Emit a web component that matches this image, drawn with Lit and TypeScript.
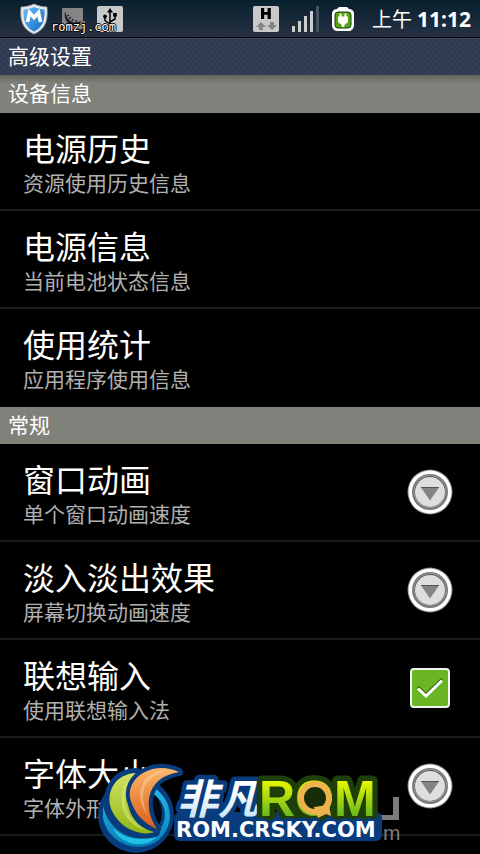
import { LitElement, html, svg, css } from "lit";
import { customElement, property, state } from "lit/decorators.js";

interface Preference {
  id: string;
  title: string;
  summary: string;
  control?: "menu" | "check";
}

const deviceInfo: Preference[] = [
  { id: "history", title: "电源历史", summary: "资源使用历史信息" },
  { id: "power", title: "电源信息", summary: "当前电池状态信息" },
  { id: "usage", title: "使用统计", summary: "应用程序使用信息" },
];

const general: Preference[] = [
  { id: "window", title: "窗口动画", summary: "单个窗口动画速度", control: "menu" },
  { id: "fade", title: "淡入淡出效果", summary: "屏幕切换动画速度", control: "menu" },
  { id: "predict", title: "联想输入", summary: "使用联想输入法", control: "check" },
  { id: "font", title: "字体大小", summary: "字体外形大小", control: "menu" },
];

@customElement("status-bar")
class StatusBar extends LitElement {
  static styles = css`
    :host {
      display: flex;
      align-items: center;
      justify-content: space-between;
      height: 38px;
      padding: 0 9px 0 20px;
      box-sizing: border-box;
      color: #fff;
      background: linear-gradient(#08202e, #263144);
      border-bottom: 1px solid #000;
    }
    .group {
      display: flex;
      align-items: center;
      gap: 14px;
      position: relative;
    }
    .right { gap: 13px; }
    svg { display: block; }
    .mark {
      position: absolute;
      left: 31px;
      top: 17px;
      font: 12px/14px "DejaVu Sans Mono", monospace;
      text-shadow: 1px 0 #000, -1px 0 #000, 0 1px #000, 0 -1px #000;
    }
    .clock {
      display: flex;
      align-items: center;
      gap: 5px;
      margin-left: 5px;
      font: 20px/24px "Noto Sans CJK SC", sans-serif;
      white-space: nowrap;
    }
    .time { font: bold 21px/24px "Noto Sans", sans-serif; }
  `;

  render() {
    return html`
      <div class="group">
        <svg width="28" height="32" viewBox="0 0 28 32">
          <defs>
            <linearGradient id="sh" x1="0" y1="0" x2="1" y2="1">
              <stop offset="0" stop-color="#6cc0f8" />
              <stop offset="1" stop-color="#1169c9" />
            </linearGradient>
          </defs>
          <path d="M14 1C10 3 5 4 1 4C0 17 2 26 14 31C26 26 28 17 27 4C23 4 18 3 14 1Z" fill="#e6e8e9" stroke="#9da5aa" stroke-width=".8" />
          <path d="M14 4C11 5.500 7 6.500 3.500 6.500C3 17 5 24 14 28.500C23 24 25 17 24.500 6.500C21 6.500 17 5.500 14 4Z" fill="url(#sh)" />
          <path d="M7.500 19L9.500 9.500L14 14.500L18.500 9.500L20.500 19" fill="none" stroke="#fff" stroke-width="3.600" />
        </svg>
        <svg width="21" height="21" viewBox="0 0 21 21">
          <rect width="21" height="21" rx="1" fill="#858585" />
          <path d="M3 3C4 6 4 9 7 12C10 15 15 15 19 13L18 16C14 19 9 18 6 15C3 12 2 8 3 3Z" fill="#1a2026" />
          <path d="M5 8l2-1M7 11l2-2M10 13l1-2M14 14v-2M6 15l-2 4" stroke="#1a2026" stroke-width="1.300" />
        </svg>
        <svg width="26" height="26" viewBox="0 0 26 26">
          <rect width="26" height="26" rx="2" fill="#c9c9c9" />
          <path d="M13 5V22M13 18L8 14.500V11M13 16L18 13V9" fill="none" stroke="#000" stroke-width="1.500" />
          <path d="M13 2L16 6.500H10Z" />
          <circle cx="8" cy="10.500" r="1.900" />
          <rect x="16.200" y="7" width="3.600" height="3.600" />
          <circle cx="13" cy="22" r="2.300" />
        </svg>
        <span class="mark">romzj.com</span>
      </div>
      <div class="group right">
        <svg width="26" height="26" viewBox="0 0 26 26">
          <rect width="26" height="26" rx="2" fill="#c9c9c9" />
          <path d="M8 2h3.200v4h3.400v-4h3.200v11h-3.200v-4.300h-3.400v4.300H8Z" />
          <path d="M8 16l5 5h-3v3H6v-3H3ZM19 24l-5-5h3v-3h4v3h3Z" fill="#858585" />
        </svg>
        <svg width="27" height="26" viewBox="0 0 27 26">
          <path d="M0 20h3v6H0ZM6 15h3v11H6ZM12 10h3v16h-3ZM18 5h3v21h-3Z" fill="#ccc" />
          <path d="M24 0h3v26h-3Z" fill="#455361" />
        </svg>
        <svg width="22" height="24" viewBox="0 0 22 24">
          <path d="M7 0H15L17 2Q21 2 22 6V19Q21 23 18 24H4Q1 23 0 19V6Q1 2 5 2Z" fill="#fff" />
          <rect x="3" y="5" width="16" height="16" rx="3" fill="#57a20f" stroke="#173c12" />
          <path d="M7.500 6.500h2v3h3v-3h2v3H16v4q0 3-3 3.500l-1 3h-2l-1-3q-3-.5-3-3.500v-4h1.500Z" fill="#fff" />
        </svg>
        <div class="clock"><span>上午</span><span class="time">11:12</span></div>
      </div>
    `;
  }
}

@customElement("preference-row")
class PreferenceRow extends LitElement {
  @property({ attribute: false }) item!: Preference;
  @state() private checked = true;

  static styles = css`
    :host {
      display: flex;
      align-items: center;
      justify-content: space-between;
      height: 98px;
      padding: 0 27px 0 23px;
      box-sizing: border-box;
      border-bottom: 2px solid #1b1b1e;
      color: #fff;
    }
    :host([last]) { border-bottom-color: #000; }
    .label { display: block; padding-top: 4px; white-space: nowrap; }
    .title { display: block; font-size: 32px; line-height: 38px; }
    .summary { display: block; font-size: 21px; line-height: 32px; color: #b0b0b0; }
    .menu {
      width: 46px;
      height: 46px;
      padding: 0;
      border: 0;
      background: none;
    }
    .menu svg { display: block; }
    .check {
      appearance: none;
      width: 40px;
      height: 40px;
      margin: 0 3px;
      border: 2px solid #f1f5ec;
      border-radius: 4px;
      background: #444;
    }
    .check:checked { background: #6ab523; }
    .wrap { display: grid; }
    .wrap > * { grid-area: 1 / 1; }
    .tick { place-self: center; pointer-events: none; }
  `;

  private toggle(e: Event) {
    this.checked = (e.target as HTMLInputElement).checked;
  }

  private control() {
    if (this.item.control === "menu") {
      return html`<button class="menu" aria-label=${this.item.title}>
        <svg width="46" height="46" viewBox="0 0 46 46">
          <circle cx="23" cy="23" r="22.500" fill="#8d8d8d" />
          <circle cx="23" cy="23" r="21.500" fill="#fff" />
          <circle cx="23" cy="23" r="18" fill="#777" />
          <circle cx="23" cy="22.500" r="16.500" fill="#999" />
          <circle cx="23" cy="22.500" r="15.500" fill="#555" />
          <circle cx="23" cy="23" r="15" fill="#dedede" />
          <path d="M14 18.500H32L23 31.500Z" fill="#848484" />
          <path d="M14 18.500H32" stroke="#555" />
        </svg>
      </button>`;
    }
    if (this.item.control === "check") {
      return html`<span class="wrap">
        <input class="check" id="box" type="checkbox" .checked=${this.checked} @change=${this.toggle} />
        ${this.checked
          ? html`<svg class="tick" width="28" height="24" viewBox="0 0 28 24">
              <path d="M2 11L10 18.500L26 3" fill="none" stroke="#2e5a0b" stroke-width="2.500" />
              <path d="M2 12.500L10 20L26 4.500" fill="none" stroke="#fff" stroke-width="3" />
            </svg>`
          : null}
      </span>`;
    }
    return null;
  }

  render() {
    return html`
      <label class="label" for="box">
        <span class="title">${this.item.title}</span>
        <span class="summary">${this.item.summary}</span>
      </label>
      ${this.control()}
    `;
  }
}

@customElement("site-badge")
class SiteBadge extends LitElement {
  static styles = css`
    :host { display: block; }
    svg { display: block; overflow: visible; }
    .han { font: italic 700 41px "Noto Sans CJK SC", sans-serif; }
    .rom { font: bold 50px "Liberation Sans", sans-serif; }
    .url { font: bold 21px "DejaVu Sans", sans-serif; }
    .faint { font: 21px "Liberation Sans", sans-serif; }
    .edge { paint-order: stroke; stroke-linejoin: round; }
  `;

  private emblem() {
    const leaf = "M39 11C18 11 6 30 14 49C22 66 42 75 57 70C35 66 19 40 39 11Z";
    const fire = "M81 10C70 5 58 5 49 9C35 15 28 28 34 42C38 53 47 62 59 67C46 48 45 16 81 10Z";
    return svg`
      <circle cx="38" cy="53" r="38" fill="#083c7c" />
      <path d="M50 27C47 41 51 53 60 63C66 51 62 36 50 27Z" fill="#020911" stroke="#020911" stroke-width="2" />
      <path d="M55 25C76 38 78 66 58 80C38 92 10 81 5 56V44C12 72 38 82 56 73C72 62 70 39 52 30Z" fill="url(#sea)" />
      <path d="M15 66C28 78 46 80 60 73C50 88 22 84 15 66Z" fill="#20bfe4" />
      <path d=${leaf} fill="url(#leaf)" stroke="#083c7c" stroke-width="10" stroke-linejoin="round" class="edge" />
      <path d="M31 15C14 42 28 64 50 69C32 60 20 43 31 15Z" fill="#e1ed85" opacity=".5" />
      <path d=${fire} fill="url(#fire)" stroke="#083c7c" stroke-width="8" stroke-linejoin="round" class="edge" />
      <path d="M72 8C42 9 34 32 51 56C40 34 43 14 72 8Z" fill="#ffd19e" opacity=".5" />
    `;
  }

  render() {
    return html`<svg width="306" height="92" viewBox="0 0 306 92" role="img" aria-label="非凡ROM">
      <defs>
        <linearGradient id="leaf" x1="0" y1="0" x2="0" y2="1">
          <stop offset="0" stop-color="#d3e267" /><stop offset="1" stop-color="#8fb714" />
        </linearGradient>
        <linearGradient id="fire" x1="0" y1="0" x2="0" y2="1">
          <stop offset="0" stop-color="#f9b76d" /><stop offset="1" stop-color="#dc5b16" />
        </linearGradient>
        <linearGradient id="sea" x1="0" y1="0" x2="0" y2="1">
          <stop offset="0" stop-color="#22b9e8" /><stop offset="1" stop-color="#087fb9" />
        </linearGradient>
        <linearGradient id="ice" x1="0" y1="0" x2="0" y2="1">
          <stop offset=".4" stop-color="#fff" /><stop offset="1" stop-color="#b7ddf7" />
        </linearGradient>
        <linearGradient id="lime" x1="0" y1="0" x2="0" y2="1">
          <stop offset=".2" stop-color="#e4f500" /><stop offset=".8" stop-color="#68b81e" />
        </linearGradient>
      </defs>
      <path d="M295 35h6v23h-19v-5h13Z" fill="#7b7b7b" />
      <text class="faint" x="285" y="78" fill="#7b7b7b">m</text>
      ${this.emblem()}
      <rect x="76" y="50" width="208" height="29" rx="6" fill="#083c7c" />
      <text class="han edge" x="79" y="52" fill="url(#ice)" stroke="#083c7c" stroke-width="9">非凡</text>
      <text class="rom edge" x="161" y="54" fill="url(#lime)" stroke="#1f3f09" stroke-width="11">ROM</text>
      <circle cx="217" cy="36" r="14" fill="#172d0a" stroke="#efb34e" stroke-width="6" />
      <path d="M216 45L231 43L233 54L228 52L220 56Z" fill="#efb34e" />
      <text class="url edge" x="78" y="75" fill="#fff" stroke="#083c7c" stroke-width="6">ROM.CRSKY.COM</text>
    </svg>`;
  }
}

@customElement("app-root")
class AppRoot extends LitElement {
  static styles = css`
    :host {
      display: block;
      position: relative;
      min-height: 100vh;
      overflow: hidden;
      background: #000;
      color: #fff;
      font-family: "Noto Sans CJK SC", sans-serif;
    }
    .heading {
      margin: 0;
      padding: 0 8px;
      height: 37px;
      box-sizing: border-box;
      font-size: 21px;
      line-height: 32px;
      font-weight: 400;
      border-top: 1px solid #454c5e;
      background: repeating-conic-gradient(#2f3950 0 25%, #343e54 0 50%) 0 0 / 6px 6px;
    }
    .section {
      margin: 0;
      padding: 0 8px;
      height: 38px;
      font-size: 21px;
      line-height: 34px;
      font-weight: 400;
      background: #80817a;
    }
    .first { background: linear-gradient(#62635e, #80817a 8px); }
    .second { height: 37px; }
    .list { margin: 0; padding: 0; list-style: none; }
    .badge { position: absolute; left: 98px; top: 762px; }
  `;

  private rows(items: Preference[], closed: boolean) {
    return html`<ul class="list">
      ${items.map(
        (item, i) => html`<li>
          <preference-row .item=${item} ?last=${closed && i === items.length - 1}></preference-row>
        </li>`
      )}
    </ul>`;
  }

  render() {
    return html`
      <status-bar></status-bar>
      <h1 class="heading">高级设置</h1>
      <h2 class="section first">设备信息</h2>
      ${this.rows(deviceInfo, true)}
      <h2 class="section second">常规</h2>
      ${this.rows(general, false)}
      <site-badge class="badge"></site-badge>
    `;
  }
}
